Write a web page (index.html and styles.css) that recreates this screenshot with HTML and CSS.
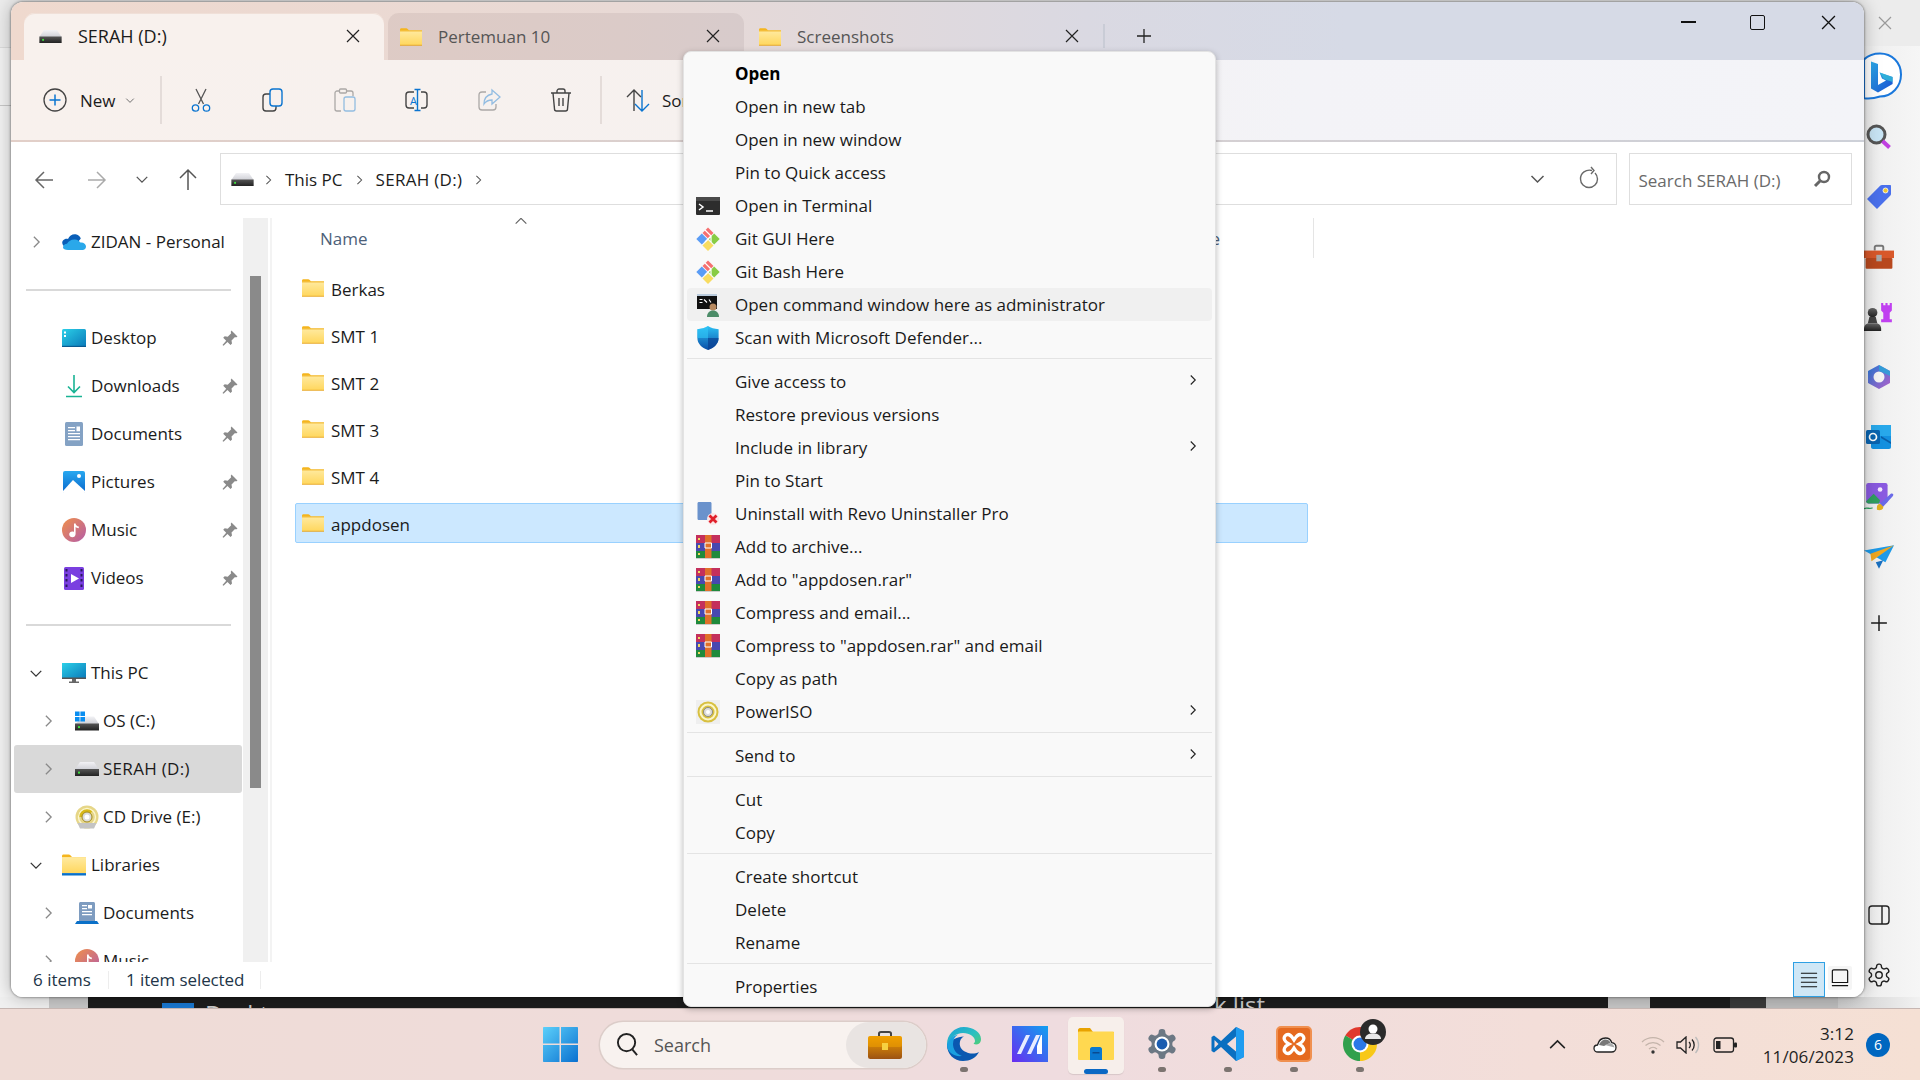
FILE: index.html
```html
<!DOCTYPE html>
<html lang="en">
<head>
<meta charset="utf-8">
<title>SERAH (D:) - File Explorer</title>
<link rel="stylesheet" href="styles.css">
</head>
<body>
<svg class="sprite" xmlns="http://www.w3.org/2000/svg">
  <defs>
    <linearGradient id="gFolder" x1="0" y1="0" x2="0" y2="1"><stop offset="0" stop-color="#ffeaa0"/><stop offset="1" stop-color="#ffd75e"/></linearGradient>
    <linearGradient id="gDriveTop" x1="0" y1="0" x2="0" y2="1"><stop offset="0" stop-color="#f2f2f5"/><stop offset="1" stop-color="#cfd0d6"/></linearGradient>
    <linearGradient id="gDriveBot" x1="0" y1="0" x2="0" y2="1"><stop offset="0" stop-color="#555"/><stop offset="1" stop-color="#222"/></linearGradient>
    <linearGradient id="gDesk" x1="0" y1="0" x2="1" y2="1"><stop offset="0" stop-color="#2bd0e8"/><stop offset="1" stop-color="#0a78b8"/></linearGradient>
    <linearGradient id="gMusic" x1="0" y1="0" x2="1" y2="1"><stop offset="0" stop-color="#f0904a"/><stop offset="1" stop-color="#b45ca8"/></linearGradient>
    <linearGradient id="gPic" x1="0" y1="0" x2="0" y2="1"><stop offset="0" stop-color="#28a8f0"/><stop offset="1" stop-color="#0a68cc"/></linearGradient>
    <linearGradient id="gShield" x1="0" y1="0" x2="0" y2="1"><stop offset="0" stop-color="#2cc0f4"/><stop offset="1" stop-color="#0a4ea8"/></linearGradient>
    <linearGradient id="gWin" x1="0" y1="0" x2="1" y2="1"><stop offset="0" stop-color="#5cd0fa"/><stop offset="1" stop-color="#0a70d0"/></linearGradient>
    <linearGradient id="gEdge" x1="0" y1="0" x2="1" y2="1"><stop offset="0" stop-color="#1a9fd8"/><stop offset=".55" stop-color="#2cc0c0"/><stop offset="1" stop-color="#58d068"/></linearGradient>
    <linearGradient id="gMM" x1="1" y1="0" x2="0" y2="1"><stop offset="0" stop-color="#10a0f0"/><stop offset="1" stop-color="#6a2cf0"/></linearGradient>
    <linearGradient id="gCase" x1="0" y1="0" x2="0" y2="1"><stop offset="0" stop-color="#f2a000"/><stop offset="1" stop-color="#9c5212"/></linearGradient>
    <linearGradient id="gBing" x1="0" y1="0" x2="1" y2="1"><stop offset="0" stop-color="#2aa8e8"/><stop offset="1" stop-color="#1a50d0"/></linearGradient>
    <linearGradient id="g365" x1="0" y1="0" x2="1" y2="1"><stop offset="0" stop-color="#2a7ad8"/><stop offset="1" stop-color="#b060c8"/></linearGradient>
    <linearGradient id="gChess" x1="0" y1="0" x2="0" y2="1"><stop offset="0" stop-color="#666"/><stop offset="1" stop-color="#222"/></linearGradient>

    <symbol id="i-folder" viewBox="0 0 24 19">
      <path fill="#f5b51e" d="M0 1.6C0 .7.6 0 1.5 0h5.4c.5 0 .9.2 1.2.5L10 2.4h14V5H0z"/>
      <rect y="2.6" width="24" height="15.6" fill="url(#gFolder)"/>
      <rect y="2.4" width="24" height="1" fill="#f0b428"/>
      <rect y="18" width="24" height="1" fill="#e8a41c"/>
    </symbol>
    <symbol id="i-lib" viewBox="0 0 24 21">
      <path fill="#f5b51e" d="M0 1.6C0 .7.6 0 1.5 0h5.4c.5 0 .9.2 1.2.5L10 2.4h14V5H0z"/>
      <rect y="2.6" width="24" height="16" fill="url(#gFolder)"/>
      <rect y="18.6" width="24" height="2.4" fill="#0a70c8"/>
    </symbol>
    <symbol id="i-drive" viewBox="0 0 24 14">
      <path fill="url(#gDriveTop)" d="M5 0h14l5 7.5H0z"/>
      <rect y="7" width="24" height="7" fill="url(#gDriveBot)"/>
      <rect x="3" y="9.6" width="2" height="2" fill="#3fe03f"/>
    </symbol>
    <symbol id="i-osdrive" viewBox="0 0 24 19">
      <path fill="url(#gDriveTop)" d="M9 5h10l5 7.5H0l4-3z"/>
      <rect y="12" width="24" height="7" fill="url(#gDriveBot)"/>
      <rect x="3" y="14.6" width="2" height="2" fill="#3fe03f"/>
      <path fill="#0a8ef0" d="M0 0h4.6v4.6H0zM5.4 0H10v4.6H5.4zM0 5.4h4.6V10H0zM5.4 5.4H10V10H5.4z"/>
    </symbol>
    <symbol id="i-onedrive" viewBox="0 0 24 16">
      <path fill="#0a5fb8" d="M5 13C1 13-1 9 1 6.500 2.500 4.800 4.500 4.500 6 5 7.500 1.500 11-.5 14.500.5c2 .6 3.500 2 4.300 4L12 13z"/>
      <path fill="#2aa8ea" d="M6 16c-3 0-5-1-5-2.500C1 11 3 9.800 5 9.800 6.500 7 9.500 5.200 13 5.500c2.400.2 4.300 1.500 5.400 3 3-.4 5.600 1.400 5.600 4 0 2-1.500 3.500-3.500 3.500z"/>
    </symbol>
    <symbol id="i-desktop" viewBox="0 0 24 18">
      <rect width="24" height="18" rx="1.500" fill="url(#gDesk)"/>
      <rect x="2" y="2.500" width="2" height="2" fill="#fff"/><rect x="2" y="6" width="2" height="2" fill="#fff"/>
      <rect y="16.800" width="24" height="1.200" fill="#0a5a90"/>
    </symbol>
    <symbol id="i-down" viewBox="0 0 24 24" fill="none" stroke="#19b394" stroke-width="1.600">
      <path d="M12 1v17M6 12.500l6 6 6-6M4 22.500h16"/>
    </symbol>
    <symbol id="i-docs" viewBox="0 0 24 24">
      <rect x="3" y="0" width="18" height="24" rx="1.500" fill="#84a2c4"/>
      <path fill="#fff" d="M6 5h7v1.200H6zM6 8h7v1.200H6zM6 11h12v1.200H6zM6 14h12v1.200H6zM6 17h12v1.200H6zM14.500 4.500H18v4.800h-3.500z"/>
    </symbol>
    <symbol id="i-docs2" viewBox="0 0 24 22">
      <path d="M4 1.500C4 .7 4.700 0 5.500 0h13c.8 0 1.500.7 1.500 1.500V20H4z" fill="#7e9cc0"/>
      <path fill="#fff" d="M7 3h5v1.200H7zM7 6h5v1.200H7zM7 9h10v1.200H7zM7 12h10v1.200H7zM13 3h4v3.500h-4z"/>
      <path d="M2 19h20l2 3H0z" fill="#0a70c8"/>
    </symbol>
    <symbol id="i-pics" viewBox="0 0 24 24">
      <rect x="1" y="1" width="22" height="22" rx="2" fill="url(#gPic)"/>
      <circle cx="17" cy="6" r="2" fill="#fff"/>
      <path fill="#fff" d="M1 21 11 10l12 11v1c0 .6-.4 1-1 1H2c-.6 0-1-.4-1-1z"/>
    </symbol>
    <symbol id="i-music" viewBox="0 0 24 24">
      <circle cx="12" cy="12" r="12" fill="url(#gMusic)"/>
      <path fill="#fff" d="M12 5.500h1.600c.2 1.800 1.400 2.800 3.200 3v1.800c-1.300 0-2.400-.5-3.200-1.200V16c0 2-1.500 3.300-3.200 3.300S7.200 18 7.200 16.300 8.600 13.500 10.400 13.500c.6 0 1.100.1 1.600.4z"/>
    </symbol>
    <symbol id="i-videos" viewBox="0 0 24 24">
      <rect x="2" y="1" width="20" height="23" rx="1.500" fill="#7a3fe0"/>
      <path fill="#fff" d="M9 8l8 4.500-8 4.500z"/>
      <path fill="#2a1a60" d="M3.500 3h2v2.500h-2zM3.500 8h2v2.500h-2zM3.500 13h2v2.500h-2zM3.500 18.500h2V21h-2zM18.500 3h2v2.500h-2zM18.500 8h2v2.500h-2zM18.500 13h2v2.500h-2zM18.500 18.500h2V21h-2z"/>
    </symbol>
    <symbol id="i-pc" viewBox="0 0 24 20">
      <rect width="24" height="16" fill="url(#gDesk)"/>
      <rect y="14.500" width="24" height="1.500" fill="#555"/>
      <path fill="#666" d="M10 16h4v2.500h-4zM7 18.500h10v1.500H7z"/>
    </symbol>
    <symbol id="i-cd" viewBox="0 0 24 24">
      <circle cx="12" cy="12" r="11.500" fill="#e6d688"/>
      <path d="M3 12a9 9 0 0 1 15-6.700L15 9a5 5 0 0 0-8 3z" fill="#d8b818"/>
      <circle cx="12" cy="12" r="8.500" fill="none" stroke="#fbf6d0" stroke-width="1.400"/>
      <circle cx="12" cy="12" r="5" fill="#dcdcdc" stroke="#a08a20" stroke-width="1"/>
      <circle cx="12" cy="12" r="2.500" fill="#fff"/>
      <path fill="#c4c4c4" d="M2.500 18h19l-2.500 5.500H5z"/>
    </symbol>
    <symbol id="i-pin" viewBox="0 0 16 16">
      <path fill="#8a8a8a" d="M9.500.5 15.500 6.500 14 7.500 13 7 9.500 10.500 10 13.500 8.500 15 5.500 12 1.500 15.800 0.500 15 4.200 10.700 1.200 7.700 2.700 6.200 5.700 6.700 9.200 3.200 8.700 2z"/>
    </symbol>
    <symbol id="i-chev-r" viewBox="0 0 10 16" fill="none" stroke="currentColor" stroke-width="1.500"><path d="M2 2l6 6-6 6"/></symbol>
    <symbol id="i-chev-d" viewBox="0 0 16 10" fill="none" stroke="currentColor" stroke-width="1.500"><path d="M2 2l6 6 6-6"/></symbol>
    <symbol id="i-x" viewBox="0 0 14 14" fill="none" stroke="currentColor" stroke-width="1.200"><path d="M1 1l12 12M13 1 1 13"/></symbol>
    <symbol id="i-plus" viewBox="0 0 16 16" fill="none" stroke="currentColor" stroke-width="1.300"><path d="M8 1v14M1 8h14"/></symbol>

    <symbol id="i-new" viewBox="0 0 24 24" fill="none"><circle cx="12" cy="12" r="11" stroke="#444" stroke-width="1.300"/><path stroke="#0a74d0" stroke-width="1.500" d="M12 6.500v11M6.500 12h11"/></symbol>
    <symbol id="i-cut" viewBox="0 0 24 24" fill="none" stroke-width="1.300"><path stroke="#555" d="M7 1l7.500 15M17 1 9.500 16"/><circle cx="6.500" cy="20" r="3.200" stroke="#0a74d0"/><circle cx="17.500" cy="20" r="3.200" stroke="#0a74d0"/></symbol>
    <symbol id="i-copy" viewBox="0 0 24 24" fill="none" stroke-width="1.400"><rect x="2" y="6" width="13" height="17" rx="3" stroke="#444"/><rect x="9" y="1" width="12" height="17" rx="3" stroke="#0a74d0" fill="#f8f1ee"/></symbol>
    <symbol id="i-paste" viewBox="0 0 24 24" fill="none" stroke-width="1.300" opacity=".42"><path stroke="#444" d="M14 3h4c1 0 2 1 2 2v3M6 3H4C3 3 2 4 2 5v16c0 1 1 2 2 2h4"/><rect x="6.500" y="1" width="7" height="4" rx="1" stroke="#444"/><rect x="11" y="9" width="11" height="14" rx="2" stroke="#0a74d0"/></symbol>
    <symbol id="i-rename" viewBox="0 0 26 24" fill="none" stroke-width="1.400"><path stroke="#444" d="M10 4H5C3 4 2 5 2 7v10c0 2 1 3 3 3h5M17 4h3c2 0 3 1 3 3v10c0 2-1 3-3 3h-3"/><path stroke="#0a74d0" d="M13.500 2v20M10.500 1.500h6M10.500 22.500h6"/><text x="6" y="16.500" font-size="11" fill="#0a74d0" stroke="none" font-family="Open Sans, sans-serif">A</text></symbol>
    <symbol id="i-share" viewBox="0 0 24 24" fill="none" stroke-width="1.300" opacity=".42"><path stroke="#444" d="M9 4H5C3 4 2 5 2 7v12c0 2 1 3 3 3h11c2 0 3-1 3-3v-3"/><path stroke="#0a74d0" d="M15 2l8 7-8 7v-4c-4 0-6 1-8 4 0-6 3-9 8-10z"/></symbol>
    <symbol id="i-trash" viewBox="0 0 24 24" fill="none" stroke="#444" stroke-width="1.400"><path d="M2 5h20M8 5V3c0-1 1-2 2-2h4c1 0 2 1 2 2v2M4 5l1.500 16c0 1 1 2 2 2h9c1 0 2-1 2-2L20 5M10 10v8M14 10v8"/></symbol>
    <symbol id="i-sort" viewBox="0 0 24 24" fill="none" stroke-width="1.400"><path stroke="#444" d="M8 23V2M1 9l7-7 7 7"/><path stroke="#0a74d0" d="M16 2v21M9 16l7 7 7-7"/></symbol>
    <symbol id="i-arrow-l" viewBox="0 0 20 20" fill="none" stroke="currentColor" stroke-width="1.500"><path d="M19 10H2M10 2l-8 8 8 8"/></symbol>
    <symbol id="i-arrow-u" viewBox="0 0 20 22" fill="none" stroke="currentColor" stroke-width="1.500"><path d="M10 22V2M2 10l8-8 8 8"/></symbol>
    <symbol id="i-refresh" viewBox="0 0 20 24" fill="none" stroke="#6a6a6a" stroke-width="1.400"><path d="M13 4.500C7 3 1.500 7 1.500 13a8.500 8.500 0 0 0 17 0c0-2.500-1-4.500-2.500-6"/><path d="M12 1l3 3.500L12 8"/></symbol>
    <symbol id="i-search-s" viewBox="0 0 18 18" fill="none" stroke="#666"><circle cx="11" cy="7" r="5" stroke-width="2.400"/><path d="M7 11l-5 5" stroke-width="3"/></symbol>
    <symbol id="i-list" viewBox="0 0 20 18" fill="none" stroke="#111" stroke-width="1.200"><path d="M1 2h18M1 7h18M1 12h18M1 17h18"/></symbol>
    <symbol id="i-prev" viewBox="0 0 20 20" fill="none" stroke="#111" stroke-width="1.300"><path d="M3 1h14c1 0 1.500.5 1.500 1.500V15H1.500V2.500C1.500 1.500 2 1 3 1zM1 18.500h18"/></symbol>

    <symbol id="i-term" viewBox="0 0 24 24"><rect y="3" width="24" height="18" rx="1" fill="#2d2d2d"/><rect y="3" width="24" height="4" fill="#4a4a4a"/><path d="M3 10l4 3-4 3" fill="none" stroke="#fff" stroke-width="1.500"/><path d="M10 17h7" stroke="#fff" stroke-width="1.500"/></symbol>
    <symbol id="i-git" viewBox="0 0 24 24">
      <path fill="#f57070" d="M12 0l5.500 5.500-5.500 5.500L6.500 5.500z" transform="translate(0 .5)"/>
      <path fill="#5a9cf5" d="M5.800 6.500 11.300 12l-5.500 5.500L.3 12z"/>
      <path fill="#88cc44" d="M18.200 6.500 23.700 12l-5.500 5.500L12.700 12z"/>
      <path fill="#f8dc60" d="M12 13l5.500 5.500L12 24l-5.500-5.500z"/>
      <path d="M9 3l6 6M15 9v6M15 9l-6 6" stroke="#fff" stroke-width="1.200" fill="none"/>
    </symbol>
    <symbol id="i-cmd" viewBox="0 0 24 24"><rect x="1" y="1" width="20" height="15" fill="#111"/><rect x="1" y="1" width="20" height="2" fill="#bcd"/><path d="M3.500 6.500h3M3.500 9.500h3M8 6.500l3 3M13 6.500l2 3" stroke="#fff" stroke-width="1.100"/><circle cx="17" cy="14" r="3.500" fill="#b88a60"/><path d="M11 24c0-4 2.500-6.500 6-6.500s6 2.500 6 6.500z" fill="#4c8c68"/></symbol>
    <symbol id="i-shield" viewBox="0 0 24 26"><path d="M12 0c3 2 7 3.200 11.500 3.500V13c0 6-4.500 10.500-11.500 13C5 23.500.5 19 .5 13V3.500C5 3.200 9 2 12 0z" fill="url(#gShield)"/><path d="M12 0v13H.5V3.500C5 3.200 9 2 12 0z" fill="#30c8f8" opacity=".6"/><path d="M12 13h11.500c0 6-4.500 10.500-11.500 13z" fill="#0a3e90" opacity=".7"/></symbol>
    <symbol id="i-revo" viewBox="0 0 24 24"><path d="M3 0h11c1 0 1.500.5 1.500 1.500V18H3c-1 0-1.500-.5-1.500-1.500V1.500C1.500.5 2 0 3 0z" fill="#6a92cc"/><circle cx="17" cy="17" r="6" fill="#fbe6e6"/><path d="M13.500 13.500l7 7M20.500 13.500l-7 7" stroke="#e0202a" stroke-width="2.800"/></symbol>
    <symbol id="i-rar" viewBox="0 0 24 24">
      <rect y="0" width="24" height="8" fill="#c4305c"/><rect y="8" width="24" height="8" fill="#4848b0"/><rect y="16" width="24" height="7" fill="#1f8a3c"/>
      <rect x="9" width="6.500" height="23" fill="#e0702a"/>
      <path d="M9 8h6.500v5H9z" fill="none" stroke="#fff" stroke-width="1"/>
      <path d="M2 3h2v2H2zM2 10h2v3H2zM2 18h2v2H2z" fill="#f0d860"/>
      <rect y="23" width="24" height="1" fill="#ccc"/>
    </symbol>
    <symbol id="i-piso" viewBox="0 0 24 24"><rect width="24" height="24" fill="#efefef"/><circle cx="12" cy="12" r="10.500" fill="#d8c040"/><circle cx="12" cy="12" r="7.500" fill="none" stroke="#fbf6c8" stroke-width="2"/><circle cx="12" cy="12" r="4.500" fill="#ddd" stroke="#777" stroke-width=".8"/><circle cx="12" cy="12" r="2" fill="#fff"/></symbol>

    <symbol id="i-win" viewBox="0 0 35 35">
      <path fill="url(#gWin)" d="M1 0h15.500v16.500H0V1c0-.6.4-1 1-1zM18 0h16c.6 0 1 .4 1 1v15.500H18zM0 18h16.500v17H1c-.6 0-1-.4-1-1zM18 18h17v16c0 .6-.4 1-1 1H18z"/>
    </symbol>
    <symbol id="i-search" viewBox="0 0 24 26" fill="none" stroke="#222" stroke-width="2"><circle cx="11" cy="11" r="9"/><path d="M17 18l5 6"/></symbol>
    <symbol id="i-case" viewBox="0 0 34 28"><path d="M11 6V2.500C11 1.500 12 1 13 1h8c1 0 2 .5 2 1.500V6" fill="none" stroke="#444" stroke-width="2"/><rect y="5" width="34" height="23" rx="2.500" fill="url(#gCase)"/><rect y="5" width="34" height="11" rx="2" fill="#f0a000" opacity=".55"/><rect x="14" y="12" width="6" height="7" fill="#f6d040"/></symbol>
    <symbol id="i-edge" viewBox="0 0 36 36">
      <path fill="url(#gEdge)" d="M18 1C8 1 1 9 1 18c0 1 .1 2 .3 3C3 12 10 7 17 7c7 0 12 4 12 8 0 1-.6 2-1.500 2.500 2 1.700 7.500 1.500 7.500-4.500C35 6 27 1 18 1z"/>
      <path fill="#0a58b0" d="M1 19c0 9 7 16 16 16 7 0 13-3 16-9-4 2-9 2-13 0-5-2-7-6-6-10.500.6-2.500 2-4 4-5-7 .5-13 3-17 8.500z"/>
      <path fill="#1aa0e0" d="M1 19C2 14 6 10 12 8.500c-3 2-5 5-5 9.500 0 5 3 10 9 12-8 1-15-4-15-11z"/>
    </symbol>
    <symbol id="i-mm" viewBox="0 0 36 36"><rect width="36" height="36" fill="url(#gMM)"/><path fill="#e8ecff" d="M14 9h4l-9 19H5zM24 9h4l-9 19h-4z"/><path fill="#fff" d="M29 9h1v19h-5v-8z"/></symbol>
    <symbol id="i-expl" viewBox="0 0 36 32">
      <path fill="#e8a200" d="M0 2C0 1 1 0 2 0h10l3 4h21v4H0z"/>
      <rect y="3.500" width="36" height="28.500" rx="1" fill="#ffd850"/>
      <path fill="#0a78d0" d="M12 21c0-1 1-2 2-2h8c1 0 2 1 2 2v11H12z"/>
      <rect x="14.500" y="24" width="7" height="1.500" fill="#0a4a90"/>
    </symbol>
    <symbol id="i-gear" viewBox="0 0 24 24"><path d="M12.220 2h-.44a2 2 0 0 0-2 2v.18a2 2 0 0 1-1 1.730l-.43.250a2 2 0 0 1-2 0l-.15-.08a2 2 0 0 0-2.730.730l-.22.380a2 2 0 0 0 .730 2.730l.15.100a2 2 0 0 1 1 1.720v.510a2 2 0 0 1-1 1.740l-.15.090a2 2 0 0 0-.730 2.730l.22.380a2 2 0 0 0 2.730.730l.15-.08a2 2 0 0 1 2 0l.43.250a2 2 0 0 1 1 1.730V20a2 2 0 0 0 2 2h.44a2 2 0 0 0 2-2v-.18a2 2 0 0 1 1-1.730l.43-.25a2 2 0 0 1 2 0l.15.080a2 2 0 0 0 2.730-.730l.22-.390a2 2 0 0 0-.730-2.730l-.15-.08a2 2 0 0 1-1-1.740v-.5a2 2 0 0 1 1-1.740l.15-.090a2 2 0 0 0 .730-2.730l-.22-.38a2 2 0 0 0-2.730-.730l-.15.080a2 2 0 0 1-2 0l-.43-.25a2 2 0 0 1-1-1.730V4a2 2 0 0 0-2-2z" fill="#6c7884"/><circle cx="12" cy="12" r="5" fill="#fff"/><circle cx="12" cy="12" r="3.600" fill="#1a5cb0"/></symbol>
    <symbol id="i-gear-o" viewBox="0 0 24 24" fill="none" stroke="#222" stroke-width="1.300"><path d="M12.220 2h-.44a2 2 0 0 0-2 2v.18a2 2 0 0 1-1 1.730l-.43.250a2 2 0 0 1-2 0l-.15-.08a2 2 0 0 0-2.730.730l-.22.380a2 2 0 0 0 .730 2.730l.15.100a2 2 0 0 1 1 1.720v.510a2 2 0 0 1-1 1.740l-.15.090a2 2 0 0 0-.730 2.730l.22.380a2 2 0 0 0 2.730.730l.15-.08a2 2 0 0 1 2 0l.43.250a2 2 0 0 1 1 1.730V20a2 2 0 0 0 2 2h.44a2 2 0 0 0 2-2v-.18a2 2 0 0 1 1-1.730l.43-.25a2 2 0 0 1 2 0l.15.080a2 2 0 0 0 2.730-.730l.22-.390a2 2 0 0 0-.730-2.730l-.15-.08a2 2 0 0 1-1-1.740v-.5a2 2 0 0 1 1-1.740l.15-.090a2 2 0 0 0 .730-2.730l-.22-.38a2 2 0 0 0-2.730-.730l-.15.080a2 2 0 0 1-2 0l-.43-.25a2 2 0 0 1-1-1.730V4a2 2 0 0 0-2-2z"/><circle cx="12" cy="12" r="3"/></symbol>
    <symbol id="i-code" viewBox="0 0 36 36">
      <path fill="#0a6fc0" fill-rule="evenodd" d="M26 1l8 4v26l-8 4L11 21 4 26.500 1.500 25V11L4 9.500 11 15zM26 10.500 17 18l9 7.500zM4.500 14v8L8.500 18z"/>
      <path fill="#1f9cf0" d="M26 1l8 4v26l-8 4z"/>
    </symbol>
    <symbol id="i-xampp" viewBox="0 0 36 36"><rect x="1" y="1" width="34" height="34" rx="4" fill="#e56a20" stroke="#f09050" stroke-width="2"/><path d="M10 9c4-2 6 2 8 5 2-3 4-7 8-5 4 3 1 7-3 9 4 2 7 6 3 9-4 2-6-2-8-5-2 3-4 7-8 5-4-3-1-7 3-9-4-2-7-6-3-9z" fill="none" stroke="#fff" stroke-width="3.200"/></symbol>
    <symbol id="i-chrome" viewBox="0 0 36 36">
      <path fill="#e0382c" d="M18 18 3.300 9.500A17 17 0 0 1 32.700 9.500z"/>
      <path fill="#f8c818" d="M18 18 32.700 9.500A17 17 0 0 1 18 35z"/>
      <path fill="#30a04c" d="M18 18 18 35A17 17 0 0 1 3.300 9.500z"/>
      <circle cx="18" cy="18" r="8.500" fill="#fff"/><circle cx="18" cy="18" r="6.500" fill="#2a78e8"/>
    </symbol>
    <symbol id="i-person" viewBox="0 0 26 26"><circle cx="13" cy="13" r="13" fill="#2b2b2b"/><circle cx="13" cy="10" r="4.500" fill="#fff"/><path d="M5 20c0-3.500 3-5.500 8-5.500s8 2 8 5.500z" fill="#e8e8e8"/></symbol>
    <symbol id="i-caret" viewBox="0 0 18 12" fill="none" stroke="#222" stroke-width="1.700"><path d="M1 10l8-8 8 8"/></symbol>
    <symbol id="i-cloud" viewBox="0 0 24 16"><path d="M5 15C2.500 15 1 13.400 1 11.500 1 9.500 2.500 8 4.500 8 5.500 4 8.500 1 12.500 1c3 0 5.500 2 6.300 4.700C21.200 6 23 8 23 10.500c0 2.500-1.800 4.500-4.500 4.500z" fill="#fff" stroke="#222" stroke-width="1.300"/><path d="M6 8c1-3 3.500-5.500 6.500-5.500 2 0 4 1.200 5 3.200L11 9z" fill="#777"/><path d="M12 8l5-2c2 .3 4 2 4.500 4.500z" fill="#aaa"/></symbol>
    <symbol id="i-wifi" viewBox="0 0 24 18" fill="none" stroke="#c4b4aa" stroke-width="1.200"><path d="M1 6a16 16 0 0 1 22 0M4.500 9.500a11 11 0 0 1 15 0M8 13a6 6 0 0 1 8 0"/><circle cx="12" cy="16" r="1.700" fill="#333" stroke="none"/></symbol>
    <symbol id="i-vol" viewBox="0 0 24 18" fill="none" stroke="#222" stroke-width="1.300"><path d="M1 6v6h3.500L10 17V1L4.500 6z"/><path d="M13 6a4 4 0 0 1 0 6M16 3.500a8 8 0 0 1 0 11"/><path d="M19.500 1a12 12 0 0 1 0 16" stroke="#bbb"/></symbol>
    <symbol id="i-batt" viewBox="0 0 24 16"><rect x="1" y="1" width="19.500" height="14" rx="2.500" fill="none" stroke="#222" stroke-width="1.300"/><rect x="3" y="4" width="4.500" height="8" fill="#222"/><rect x="21" y="5.500" width="3" height="5" rx="1" fill="#222"/></symbol>

    <symbol id="i-bing" viewBox="0 0 56 60">
      <path d="M-4 51C4 53 10 52 16 50 28 50 37 40 37 28 37 16 28 7 16 7 10 7 4 9 0 13V51z" fill="#fff" stroke="#1a78dc" stroke-width="2"/>
      <g transform="translate(-11 5)">
        <path fill="url(#gBing)" d="M18 10l7 2.500v21l8-4.600-4-1.900-2.400-6 13 4.500v7L25 41l-7-4z"/>
        <path fill="#35c8d8" d="M26.600 21l13 4.500v5l-9-3z" opacity=".7"/>
      </g>
    </symbol>
    <symbol id="i-mag" viewBox="0 0 26 26"><circle cx="10.500" cy="10.500" r="8.500" fill="#c8e4f4" stroke="#555" stroke-width="3"/><path d="M16.500 17l7 6.500" stroke="#c040e0" stroke-width="4"/></symbol>
    <symbol id="i-tag" viewBox="0 0 26 26"><path d="M16 1h8c.6 0 1 .4 1 1v8c0 .6-.2 1.200-.6 1.600L11 25 1 15 14.400 1.600C14.800 1.200 15.400 1 16 1z" fill="#4a70ec"/><circle cx="19.500" cy="6.500" r="2.500" fill="#f0c830" stroke="#fff" stroke-width=".8"/></symbol>
    <symbol id="i-tool" viewBox="0 0 28 24"><path d="M10 6V3c0-1 .6-1.500 1.500-1.500h5c.9 0 1.500.5 1.500 1.500v3" fill="none" stroke="#777" stroke-width="1.800"/><rect y="6" width="28" height="7" fill="#d8582a"/><rect x="1.500" y="13" width="25" height="10" rx="1" fill="#b8481e"/><rect x="11.500" y="10" width="5" height="6" fill="#aaa"/></symbol>
    <symbol id="i-chess" viewBox="0 0 28 26"><circle cx="8" cy="9" r="4.500" fill="url(#gChess)"/><path d="M5 13h6l1.500 6h-9z" fill="#444"/><path d="M0 24c0-3 2-5 4-5h8c2 0 4 2 4 5v2H0z" fill="url(#gChess)"/><path d="M16 0h2v2h2V0h2v2h2V0h2v7l-2 2v6h2v3H16v-3h2V9l-2-2z" fill="#c040f0"/></symbol>
    <symbol id="i-m365" viewBox="0 0 26 26"><path d="M13 1 24 7v12L13 25 2 19V7z" fill="url(#g365)"/><circle cx="13" cy="13" r="5.500" fill="#f4f4f4"/><path d="M13 1 24 7v5l-6-3-5-2z" fill="#28a8d8" opacity=".8"/></symbol>
    <symbol id="i-outl" viewBox="0 0 26 24"><rect x="5" y="0" width="20" height="11" fill="#28a8ea"/><path d="M5 11h20v11c0 1-.6 2-2 2H7c-1 0-2-1-2-2z" fill="#1490df"/><path d="M15 11l10 6v2l-10-6z" fill="#0a5fa8"/><rect y="5" width="14" height="14" rx="1.500" fill="#0a64b0"/><circle cx="7" cy="12" r="3.500" fill="none" stroke="#fff" stroke-width="1.700"/></symbol>
    <symbol id="i-paint" viewBox="0 0 28 26"><rect x="2" y="0" width="20" height="19" rx="2" fill="#8a5ae0"/><path d="M2 17 9 10l6 6-1 3H4c-1 0-2-.8-2-2z" fill="#30a060"/><circle cx="15" cy="6" r="2.200" fill="#f4e8ff"/><path d="M14 20 25 10c2-.8 3 1 2 2L17 23z" fill="#6a6ae8"/><path d="M12 23c0-3 2-4 4-3l2 2c0 3-3 4-6 3z" fill="#e0b020"/><path d="M0 24c3-2 5 1 8-1" fill="none" stroke="#30a060" stroke-width="1.200"/></symbol>
    <symbol id="i-send" viewBox="0 0 28 22"><path d="M0 5 28 0 20 16z" fill="#1e9ae8"/><path d="M6 8 28 0 7 15z" fill="#f0a820"/><path d="M18 14l-4 8-3-6z" fill="#1a70c0"/></symbol>
    <symbol id="i-panel" viewBox="0 0 22 20" fill="none" stroke="#222" stroke-width="1.400"><rect x="1" y="1" width="20" height="18" rx="3"/><path d="M14 1v18"/></symbol>
  </defs>
</svg>

<main class="desktop">
  <div class="backdrop">
    <div class="bg-top"><svg class="bg-close"><use href="#i-x"/></svg></div>
    <div class="rail">
      <svg class="rail-bing"><use href="#i-bing"/></svg>
      <span class="rail-slot"><svg class="ic-26"><use href="#i-mag"/></svg></span>
      <span class="rail-slot"><svg class="ic-26"><use href="#i-tag"/></svg></span>
      <span class="rail-slot"><svg class="ic-28"><use href="#i-tool"/></svg></span>
      <span class="rail-slot"><svg class="ic-28"><use href="#i-chess"/></svg></span>
      <span class="rail-slot"><svg class="ic-26"><use href="#i-m365"/></svg></span>
      <span class="rail-slot"><svg class="ic-26"><use href="#i-outl"/></svg></span>
      <span class="rail-slot"><svg class="ic-28"><use href="#i-paint"/></svg></span>
      <span class="rail-slot"><svg class="ic-28"><use href="#i-send"/></svg></span>
      <span class="rail-slot rail-plus"><svg class="ic-18"><use href="#i-plus"/></svg></span>
      <span class="rail-slot rail-push"><svg class="ic-22"><use href="#i-panel"/></svg></span>
      <span class="rail-slot"><svg class="ic-26"><use href="#i-gear-o"/></svg></span>
    </div>
    <div class="bg-strip">
      <span class="seg seg-a"></span><span class="seg seg-b"></span>
      <span class="seg seg-dark"><i class="blue-block"></i><span class="strip-text strip-desk">Desktop</span><span class="strip-text strip-list">k list</span></span>
      <span class="seg seg-c"></span><span class="seg seg-d"></span><span class="seg seg-e"></span><span class="seg seg-f"></span><span class="seg seg-g"></span>
    </div>
  </div>

  <section class="window">
    <header class="titlebar">
      <div class="tab tab-active">
        <svg class="ic-drive"><use href="#i-drive"/></svg><span class="tab-name">SERAH (D:)</span><svg class="tab-x"><use href="#i-x"/></svg>
      </div>
      <div class="tab tab-idle">
        <svg class="ic-folder"><use href="#i-folder"/></svg><span class="tab-name">Pertemuan 10</span><svg class="tab-x"><use href="#i-x"/></svg>
      </div>
      <div class="tab tab-plain">
        <svg class="ic-folder"><use href="#i-folder"/></svg><span class="tab-name">Screenshots</span><svg class="tab-x"><use href="#i-x"/></svg>
      </div>
      <span class="tab-sep"></span>
      <svg class="tab-add"><use href="#i-plus"/></svg>
      <div class="caption">
        <span class="cap-btn"><i class="cap-min"></i></span>
        <span class="cap-btn"><i class="cap-max"></i></span>
        <span class="cap-btn"><svg class="cap-x"><use href="#i-x"/></svg></span>
      </div>
    </header>

    <div class="toolbar">
      <div class="tb-new">
        <svg class="ic-24"><use href="#i-new"/></svg><span class="tb-label">New</span><svg class="tb-chev"><use href="#i-chev-d"/></svg>
      </div>
      <span class="tb-sep"></span>
      <span class="tb-btn"><svg class="ic-24"><use href="#i-cut"/></svg></span>
      <span class="tb-btn"><svg class="ic-24"><use href="#i-copy"/></svg></span>
      <span class="tb-btn"><svg class="ic-24"><use href="#i-paste"/></svg></span>
      <span class="tb-btn"><svg class="ic-26"><use href="#i-rename"/></svg></span>
      <span class="tb-btn"><svg class="ic-24"><use href="#i-share"/></svg></span>
      <span class="tb-btn"><svg class="ic-24"><use href="#i-trash"/></svg></span>
      <span class="tb-sep tb-sep2"></span>
      <svg class="ic-24 tb-sort"><use href="#i-sort"/></svg><span class="tb-so">Sort</span>
    </div>

    <div class="addr-row">
      <svg class="ar-btn ar-back"><use href="#i-arrow-l"/></svg>
      <svg class="ar-btn ar-fwd"><use href="#i-arrow-l"/></svg>
      <svg class="ar-down"><use href="#i-chev-d"/></svg>
      <svg class="ar-up"><use href="#i-arrow-u"/></svg>
      <div class="addr-box">
        <svg class="ic-drive ad-drive"><use href="#i-drive"/></svg>
        <svg class="crumb"><use href="#i-chev-r"/></svg>
        <span class="crumb-t">This PC</span>
        <svg class="crumb"><use href="#i-chev-r"/></svg>
        <span class="crumb-t caps">SERAH (D:)</span>
        <svg class="crumb"><use href="#i-chev-r"/></svg>
        <svg class="ad-chev"><use href="#i-chev-d"/></svg>
        <svg class="ad-refresh"><use href="#i-refresh"/></svg>
      </div>
      <div class="search-box"><span>Search SERAH (D:)</span><svg class="sb-ic"><use href="#i-search-s"/></svg></div>
    </div>

    <div class="main">
      <nav class="nav">
        <div class="nrow"><svg class="chev"><use href="#i-chev-r"/></svg><svg class="nic nic-od"><use href="#i-onedrive"/></svg><span class="nlabel">ZIDAN - Personal</span></div>
        <div class="ndiv"></div>
        <div class="nrow"><span class="chev"></span><svg class="nic"><use href="#i-desktop"/></svg><span class="nlabel">Desktop</span><svg class="pin"><use href="#i-pin"/></svg></div>
        <div class="nrow"><span class="chev"></span><svg class="nic"><use href="#i-down"/></svg><span class="nlabel">Downloads</span><svg class="pin"><use href="#i-pin"/></svg></div>
        <div class="nrow"><span class="chev"></span><svg class="nic"><use href="#i-docs"/></svg><span class="nlabel">Documents</span><svg class="pin"><use href="#i-pin"/></svg></div>
        <div class="nrow"><span class="chev"></span><svg class="nic"><use href="#i-pics"/></svg><span class="nlabel">Pictures</span><svg class="pin"><use href="#i-pin"/></svg></div>
        <div class="nrow"><span class="chev"></span><svg class="nic"><use href="#i-music"/></svg><span class="nlabel">Music</span><svg class="pin"><use href="#i-pin"/></svg></div>
        <div class="nrow"><span class="chev"></span><svg class="nic"><use href="#i-videos"/></svg><span class="nlabel">Videos</span><svg class="pin"><use href="#i-pin"/></svg></div>
        <div class="ndiv ndiv-b"></div>
        <div class="nrow"><svg class="chev-open"><use href="#i-chev-d"/></svg><svg class="nic"><use href="#i-pc"/></svg><span class="nlabel">This PC</span></div>
        <div class="nrow nsub"><svg class="chev"><use href="#i-chev-r"/></svg><svg class="nic"><use href="#i-osdrive"/></svg><span class="nlabel">OS (C:)</span></div>
        <div class="nrow nsub nsel"><svg class="chev"><use href="#i-chev-r"/></svg><svg class="nic"><use href="#i-drive"/></svg><span class="nlabel caps">SERAH (D:)</span></div>
        <div class="nrow nsub"><svg class="chev"><use href="#i-chev-r"/></svg><svg class="nic"><use href="#i-cd"/></svg><span class="nlabel">CD Drive (E:)</span></div>
        <div class="nrow"><svg class="chev-open"><use href="#i-chev-d"/></svg><svg class="nic"><use href="#i-lib"/></svg><span class="nlabel">Libraries</span></div>
        <div class="nrow nsub"><svg class="chev"><use href="#i-chev-r"/></svg><svg class="nic"><use href="#i-docs2"/></svg><span class="nlabel">Documents</span></div>
        <div class="nrow nsub"><svg class="chev"><use href="#i-chev-r"/></svg><svg class="nic"><use href="#i-music"/></svg><span class="nlabel">Music</span></div>
      </nav>
      <div class="scrollbar"><span class="thumb"></span></div>
      <div class="list">
        <div class="lhead">
          <span class="col-name">Name<svg class="sort-caret"><use href="#i-caret"/></svg></span>
          <span class="col-size">Size</span>
          <span class="col-sep"></span>
        </div>
        <div class="lrow"><svg class="ic-folder"><use href="#i-folder"/></svg><span>Berkas</span></div>
        <div class="lrow"><svg class="ic-folder"><use href="#i-folder"/></svg><span>SMT 1</span></div>
        <div class="lrow"><svg class="ic-folder"><use href="#i-folder"/></svg><span>SMT 2</span></div>
        <div class="lrow"><svg class="ic-folder"><use href="#i-folder"/></svg><span>SMT 3</span></div>
        <div class="lrow"><svg class="ic-folder"><use href="#i-folder"/></svg><span>SMT 4</span></div>
        <div class="lrow lsel"><svg class="ic-folder"><use href="#i-folder"/></svg><span>appdosen</span></div>
      </div>
    </div>

    <footer class="status">
      <span class="st-a">6 items</span><span class="st-sep"></span>
      <span class="st-b">1 item selected</span><span class="st-sep"></span>
      <span class="vw vw-on"><svg class="vw-ic"><use href="#i-list"/></svg></span>
      <span class="vw vw-off"><svg class="vw-ic2"><use href="#i-prev"/></svg></span>
    </footer>
  </section>

  <div class="menu">
    <div class="mi"><span class="mic"></span><b class="mt">Open</b></div>
    <div class="mi"><span class="mic"></span><span class="mt">Open in new tab</span></div>
    <div class="mi"><span class="mic"></span><span class="mt">Open in new window</span></div>
    <div class="mi"><span class="mic"></span><span class="mt">Pin to Quick access</span></div>
    <div class="mi"><svg class="mic"><use href="#i-term"/></svg><span class="mt">Open in Terminal</span></div>
    <div class="mi"><svg class="mic"><use href="#i-git"/></svg><span class="mt">Git GUI Here</span></div>
    <div class="mi"><svg class="mic"><use href="#i-git"/></svg><span class="mt">Git Bash Here</span></div>
    <div class="mi mi-hover"><svg class="mic"><use href="#i-cmd"/></svg><span class="mt">Open command window here as administrator</span></div>
    <div class="mi"><svg class="mic"><use href="#i-shield"/></svg><span class="mt">Scan with Microsoft Defender...</span></div>
    <div class="msep"></div>
    <div class="mi"><span class="mic"></span><span class="mt">Give access to</span><svg class="marrow"><use href="#i-chev-r"/></svg></div>
    <div class="mi"><span class="mic"></span><span class="mt">Restore previous versions</span></div>
    <div class="mi"><span class="mic"></span><span class="mt">Include in library</span><svg class="marrow"><use href="#i-chev-r"/></svg></div>
    <div class="mi"><span class="mic"></span><span class="mt">Pin to Start</span></div>
    <div class="mi"><svg class="mic"><use href="#i-revo"/></svg><span class="mt">Uninstall with Revo Uninstaller Pro</span></div>
    <div class="mi"><svg class="mic"><use href="#i-rar"/></svg><span class="mt">Add to archive...</span></div>
    <div class="mi"><svg class="mic"><use href="#i-rar"/></svg><span class="mt">Add to "appdosen.rar"</span></div>
    <div class="mi"><svg class="mic"><use href="#i-rar"/></svg><span class="mt">Compress and email...</span></div>
    <div class="mi"><svg class="mic"><use href="#i-rar"/></svg><span class="mt">Compress to "appdosen.rar" and email</span></div>
    <div class="mi"><span class="mic"></span><span class="mt">Copy as path</span></div>
    <div class="mi"><svg class="mic"><use href="#i-piso"/></svg><span class="mt">PowerISO</span><svg class="marrow"><use href="#i-chev-r"/></svg></div>
    <div class="msep"></div>
    <div class="mi"><span class="mic"></span><span class="mt">Send to</span><svg class="marrow"><use href="#i-chev-r"/></svg></div>
    <div class="msep"></div>
    <div class="mi"><span class="mic"></span><span class="mt">Cut</span></div>
    <div class="mi"><span class="mic"></span><span class="mt">Copy</span></div>
    <div class="msep"></div>
    <div class="mi"><span class="mic"></span><span class="mt">Create shortcut</span></div>
    <div class="mi"><span class="mic"></span><span class="mt">Delete</span></div>
    <div class="mi"><span class="mic"></span><span class="mt">Rename</span></div>
    <div class="msep"></div>
    <div class="mi"><span class="mic"></span><span class="mt">Properties</span></div>
  </div>
</main>

<footer class="taskbar">
  <svg class="tk-start"><use href="#i-win"/></svg>
  <div class="tk-search">
    <svg class="tk-mag"><use href="#i-search"/></svg><span class="tk-search-t">Search</span>
    <span class="tk-case"><svg class="tk-case-ic"><use href="#i-case"/></svg></span>
  </div>
  <div class="tk-apps">
    <span class="app"><svg class="app-ic"><use href="#i-edge"/></svg><i class="dot"></i></span>
    <span class="app"><svg class="app-ic"><use href="#i-mm"/></svg></span>
    <span class="app app-on"><svg class="app-ic"><use href="#i-expl"/></svg><i class="bar"></i></span>
    <span class="app"><svg class="app-ic"><use href="#i-gear"/></svg><i class="dot"></i></span>
    <span class="app"><svg class="app-ic"><use href="#i-code"/></svg><i class="dot"></i></span>
    <span class="app"><svg class="app-ic"><use href="#i-xampp"/></svg><i class="dot"></i></span>
    <span class="app"><svg class="app-ic"><use href="#i-chrome"/></svg><svg class="app-badge"><use href="#i-person"/></svg><i class="dot"></i></span>
  </div>
  <div class="tray">
    <svg class="tr-caret"><use href="#i-caret"/></svg>
    <svg class="tr-ic tr-cloud"><use href="#i-cloud"/></svg>
    <svg class="tr-ic tr-wifi"><use href="#i-wifi"/></svg>
    <svg class="tr-ic tr-vol"><use href="#i-vol"/></svg>
    <svg class="tr-ic tr-batt"><use href="#i-batt"/></svg>
    <div class="clock"><span>3:12</span><span>11/06/2023</span></div>
    <span class="notif">6</span>
  </div>
</footer>
</body>
</html>
```

FILE: styles.css
```css
* { box-sizing: border-box; }
html, body { margin: 0; padding: 0; }
body {
  width: 1920px; height: 1080px; overflow: hidden;
  display: flex; flex-direction: column;
  font-family: "Open Sans", "Noto Sans", "Liberation Sans", sans-serif;
  font-size: 17px; color: #1b1b1b; background: #f3f3f3;
}
svg { display: block; flex: none; }
.sprite { width: 0; height: 0; flex: none; }
i { font-style: normal; }
.caps { letter-spacing: .3px; }

.ic-18 { width: 18px; height: 18px; }
.ic-22 { width: 22px; height: 20px; }
.ic-24 { width: 24px; height: 24px; }
.ic-26 { width: 26px; height: 26px; }
.ic-28 { width: 30px; height: 28px; }
.ic-drive { width: 23px; height: 13px; }
.ic-folder { width: 22px; height: 18px; }

/* Desktop & background Edge window */
.desktop { position: relative; height: 1008px; flex: none; }
.backdrop { position: absolute; inset: 0; background: linear-gradient(#c8c8c8, #c8c8c8) 0 105px / 11px 1px no-repeat; }
.bg-top { height: 48px; background: #ececec; border-bottom: 1px solid #dcdcdc; display: flex; justify-content: flex-end; padding: 16px 28px 0 0; }
.bg-close { width: 14px; height: 14px; color: #9a9a9a; }
.rail { position: absolute; left: 1864px; top: 46px; width: 56px; height: 959px; display: flex; flex-direction: column; background: linear-gradient(90deg, #eee, #f6f6f6); }
.rail-bing { width: 56px; height: 61px; overflow: visible; }
.rail-slot { width: 30px; height: 60px; flex: none; display: flex; align-items: center; justify-content: center; }
.rail-plus { margin-top: 6px; }
.rail-push { margin-top: auto; }
.bg-strip { position: absolute; left: 0; right: 0; top: 997px; height: 11px; display: flex; overflow: hidden; }
.seg { display: block; height: 100%; flex: none; }
.seg-a { width: 49px; background: #f0f0f0; }
.seg-b { width: 39px; background: #c8c8c8; }
.seg-dark { width: 1520px; background: #1d1d1d; position: relative; color: #ccc; }
.seg-c { width: 42px; background: #c6c6c6; }
.seg-d { width: 80px; background: #1d1d1d; }
.seg-e { width: 36px; background: #3a3a3a; }
.seg-f { width: 72px; background: #bdbdbd; }
.seg-g { flex: 1; background: linear-gradient(90deg, #ccc, #f2f2f2); }
.blue-block { position: absolute; left: 74px; top: 6px; width: 32px; height: 6px; background: #1a78d0; }
.strip-text { position: absolute; font-size: 24px; line-height: 24px; }
.strip-desk { left: 117px; top: 5px; }
.strip-list { left: 1126px; top: -4px; }

/* Window */
.window { position: absolute; left: 11px; top: 2px; width: 1852.500px; height: 995px; border-radius: 12px; overflow: hidden; background: #fff; display: flex; flex-direction: column; box-shadow: 0 0 2px 1px rgba(0,0,0,.28), 0 0 18px rgba(0,0,0,.28); }

.titlebar { height: 58px; flex: none; display: flex; align-items: flex-end; padding-left: 13px; background: linear-gradient(90deg, #efd9ce 0, #e8d9d5 33%, #dad9e2 58%, #d6dae6 72%, #d6dae6 100%); position: relative; }
.tab { height: 47px; flex: none; display: flex; align-items: center; border-radius: 11px 11px 0 0; padding-right: 24px; }
.tab-active { width: 360px; padding-left: 15px; background: #f8f1ed; box-shadow: inset 0 1px 0 #f0e0d8; font-size: 18px; }
.tab-idle { width: 356px; margin-left: 4px; padding-left: 12px; background: rgba(110,90,90,.1); color: #555; }
.tab-plain { width: 359px; padding-left: 15px; color: #555; }
.tab-name { margin-left: 16px; padding-bottom: 1px; }
.tab-x { width: 14px; height: 14px; margin-left: auto; color: #222; margin-top: -2px; }
.tab-sep { width: 2px; height: 24px; background: #c9ccd6; margin-bottom: 12px; flex: none; }
.tab-add { width: 16px; height: 16px; margin-left: 31px; margin-bottom: 16px; color: #222; }
.caption { margin-left: auto; align-self: flex-start; display: flex; }
.cap-btn { width: 70px; height: 40px; display: flex; align-items: center; justify-content: center; }
.cap-min { width: 15px; height: 1.500px; background: #111; display: block; }
.cap-max { width: 15px; height: 15px; border: 1.500px solid #111; border-radius: 2px; display: block; margin-right: 2px; }
.cap-x { width: 15px; height: 15px; color: #111; }

.toolbar { height: 82px; flex: none; display: flex; align-items: center; padding-left: 32px; background: linear-gradient(90deg, #f8f1ed 0, #f6f1ef 40%, #f3f3f7 70%, #f3f4f8 100%); border-bottom: 2px solid; border-image: linear-gradient(90deg, #e2cfc8, #cdd0d8) 1; }
.tb-new { width: 117px; display: flex; align-items: center; }
.tb-label { margin-left: 13px; }
.tb-chev { width: 10px; height: 7px; margin-left: 9px; color: #666; }
.tb-sep { width: 2px; height: 48px; background: #e4dcd9; flex: none; }
.tb-btn { width: 72px; height: 48px; display: flex; align-items: center; justify-content: center; flex: none; }
.tb-sep + .tb-btn { margin-left: 3px; }
.tb-sep2 { margin-left: 3px; }
.tb-sort { margin-left: 24px; }
.tb-so { margin-left: 12px; }

.addr-row { height: 76px; flex: none; display: flex; align-items: flex-start; padding: 11px 12px 13px 23px; background: #fff; }
.ar-btn { width: 20px; height: 20px; margin-top: 17px; }
.ar-back { color: #666; }
.ar-fwd { color: #aaa; margin-left: 33px; transform: scaleX(-1); }
.ar-down { width: 14px; height: 9px; margin: 22px 0 0 28px; color: #555; }
.ar-up { width: 20px; height: 22px; margin: 15px 0 0 29px; color: #555; }
.addr-box { margin-left: 22px; flex: 1; height: 52px; border: 1.500px solid #dedede; display: flex; align-items: center; padding-left: 10px; color: #1b1b1b; }
.ad-drive { margin-right: 11px; }
.crumb { width: 7px; height: 12px; color: #555; margin: 1px 13px 0 0; }
.crumb-t { margin-right: 13px; }
.ad-chev { width: 17px; height: 10px; margin-left: auto; color: #555; }
.ad-refresh { width: 20px; height: 24px; margin: -2px 17px 0 33px; }
.search-box { width: 223px; height: 52px; margin-left: 12px; flex: none; border: 1.500px solid #dedede; display: flex; align-items: center; padding: 2px 0 0 9px; color: #6a6a6a; white-space: nowrap; }
.sb-ic { width: 18px; height: 18px; margin-left: auto; margin-right: 20px; margin-top: -2px; }

.main { height: 744px; flex: none; display: flex; overflow: hidden; }
.nav { width: 232px; flex: none; overflow: hidden; }
.nrow { height: 48px; margin: 0 1px 0 3px; display: flex; align-items: center; padding: 0 4px 0 13px; border-radius: 3px; }
.chev { width: 9px; height: 14px; margin: 0 4.500px; color: #8a8a8a; flex: none; }
.chev-open { width: 14px; height: 9px; margin: 0 2px; color: #333; flex: none; }
.nic { width: 24px; height: 24px; margin-left: 17px; flex: none; }
.nlabel { margin-left: 5px; padding-bottom: 2px; white-space: nowrap; }
.pin { width: 16px; height: 16px; margin-left: auto; }
.nsub { padding-left: 25px; }
.nsub .nic { margin-left: 18px; }
.nsub .nlabel { margin-left: 4px; }
.nsel { background: #d9d9d9; }
.ndiv { height: 48px; margin: 0 12px 0 15px; background: linear-gradient(#d9d9d9, #d9d9d9) 0 23px / 100% 2px no-repeat; }
.ndiv-b { height: 47px; background-position: 0 22px; }
.scrollbar { width: 25px; flex: none; background: #f0f0f0; padding: 58px 7px 0; }
.thumb { display: block; width: 11px; height: 512px; background: #8a8a8a; }
.list { flex: 1; margin-left: 2px; border-left: 2px solid #f3f3f3; padding-left: 23px; }
.lhead { height: 50px; display: flex; align-items: flex-start; margin-left: -23px; padding-left: 48px; color: #4d6078; }
.col-name { width: 852px; height: 41px; line-height: 41px; position: relative; }
.sort-caret { position: absolute; left: 195px; top: -1px; width: 12px; height: 8px; opacity: .7; }
.col-size { width: 48px; height: 41px; line-height: 41px; text-align: right; }
.col-sep { width: 1px; height: 40px; background: #e5e5e5; margin-left: 93px; }
.lrow { width: 1013px; height: 40px; margin-bottom: 7px; display: flex; align-items: center; padding-left: 7px; gap: 7px; }
.lrow span { padding-top: 2px; }
.lsel { background: #cce8ff; border: 1px solid #99d1ff; border-radius: 2px; padding-left: 6px; }

.status { height: 35px; flex: none; display: flex; align-items: center; padding: 0 12px 0 22px; color: #223548; background: #fff; }
.st-a { width: 75px; white-space: nowrap; }
.st-sep { width: 1px; height: 18px; background: #ededed; flex: none; }
.st-b { width: 134px; margin-left: 17px; white-space: nowrap; letter-spacing: -.1px; }
.vw { display: flex; align-items: center; justify-content: center; flex: none; }
.vw-on { width: 32px; height: 35px; margin-left: auto; background: #cfe7f6; border: 1px solid #2ea0e4; }
.vw-off { width: 24px; height: 24px; margin-left: 3px; background: #f5f5f5; border-radius: 2px; margin-top: -4px; }
.vw-ic { width: 18px; height: 17px; }
.vw-ic2 { width: 18px; height: 18px; }

/* Context menu */
.menu { position: absolute; z-index: 2; left: 682.500px; top: 51px; width: 533px; height: 956px; padding: 5px 3px 4px; background: #f9f9f9; border: 1px solid #e3e3e3; border-radius: 8px; box-shadow: 0 2px 6px rgba(0,0,0,.28); }
.mi { height: 33px; display: flex; align-items: center; padding-left: 9.500px; border-radius: 4px; color: #1a1a1a; white-space: nowrap; }
.mi-hover { background: #f0f0f0; }
.mic { width: 24px; height: 24px; flex: none; display: block; }
.mt { margin-left: 15px; }
b.mt { font-weight: 700; color: #000; }
.marrow { width: 8px; height: 12px; margin-left: auto; margin-right: 15px; margin-top: -4px; color: #222; }
.msep { height: 1px; margin: 4px 0 6px; background: #e4e4e4; }

/* Taskbar */
.taskbar { position: relative; z-index: 1; height: 72px; flex: none; display: flex; align-items: center; padding-left: 543px; background: linear-gradient(90deg, #efdcd6 0, #efdcdb 40%, #efdcdf 55%, #f3ded9 80%, #f5e0d4 100%); border-top: 1px solid #c6b6b2; }
.tk-start { width: 35px; height: 35px; }
.tk-search { width: 326px; height: 46px; margin-left: 22px; flex: none; display: flex; align-items: center; border-radius: 23px; background: #f8f2ef; box-shadow: 0 0 0 1.500px #dccdc9; padding-left: 16px; overflow: hidden; }
.tk-mag { width: 23px; height: 25px; }
.tk-search-t { margin-left: 15px; color: #555; font-size: 18px; }
.tk-case { margin-left: auto; width: 80px; height: 100%; background: #e9e4e2; border-radius: 23px 0 0 23px; display: flex; align-items: center; justify-content: center; padding-right: 2px; }
.tk-case-ic { width: 34px; height: 28px; }
.tk-apps { display: flex; margin-left: 5px; height: 72px; }
.app { width: 66px; height: 71px; position: relative; display: flex; align-items: center; justify-content: center; flex: none; }
.app-ic { width: 36px; height: 36px; margin-top: -1px; }
.app-on::before { content: ""; position: absolute; left: 5px; right: 5px; top: 8px; bottom: 6px; background: #f7efeb; border-radius: 5px; box-shadow: 0 1px 1px rgba(0,0,0,.1); }
.app-on .app-ic { position: relative; height: 32px; }
.dot { position: absolute; left: 29px; bottom: 8px; width: 8px; height: 5px; border-radius: 3px; background: #7c7470; }
.bar { position: absolute; left: 21px; bottom: 6px; width: 24px; height: 5px; border-radius: 3px; background: #0a68c4; }
.app-badge { position: absolute; left: 33px; top: 10px; width: 26px; height: 26px; }
.tray { margin-left: auto; display: flex; align-items: center; padding-right: 30px; height: 100%; }
.tr-caret { width: 17px; height: 11px; }
.tr-ic { width: 24px; height: 18px; }
.tr-cloud { margin-left: 27px; }
.tr-wifi { margin-left: 24px; }
.tr-vol { margin-left: 11px; }
.tr-batt { margin-left: 13px; }
.clock { margin-left: 25px; width: 92px; display: flex; flex-direction: column; align-items: flex-end; font-size: 17px; line-height: 23px; color: #1f1f1f; white-space: nowrap; letter-spacing: .1px; }
.notif { width: 24px; height: 24px; margin-left: 12px; border-radius: 50%; background: #0067c0; color: #fff; font-size: 14px; display: flex; align-items: center; justify-content: center; }
```
